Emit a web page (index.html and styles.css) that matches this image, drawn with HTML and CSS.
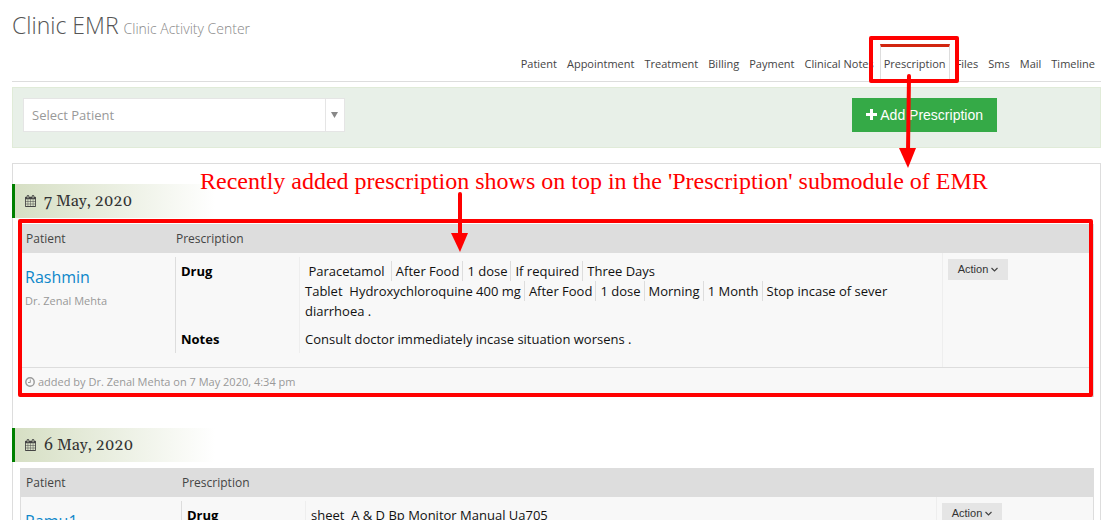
FILE: index.html
```html
<!DOCTYPE html>
<html lang="en">
<head>
<meta charset="utf-8">
<title>Clinic EMR</title>
<link rel="stylesheet" href="styles.css">
</head>
<body>
<svg width="0" height="0" class="sprite" aria-hidden="true">
  <symbol id="calendar" viewBox="0 0 1664 1792">
    <path d="M128 1664h288v-288h-288v288zM480 1664h320v-288h-320v288zM128 1312h288v-320h-288v320zM480 1312h320v-320h-320v320zM128 928h288v-288h-288v288zM864 1664h320v-288h-320v288zM480 928h320v-288h-320v288zM1248 1664h288v-288h-288v288zM864 1312h320v-320h-320v320zM512 448v-288q0-13-9.500-22.500t-22.500-9.500h-64q-13 0-22.500 9.500t-9.500 22.500v288q0 13 9.500 22.500t22.500 9.500h64q13 0 22.500-9.500t9.500-22.500zM1248 1312h288v-320h-288v320zM864 928h320v-288h-320v288zM1248 928h288v-288h-288v288zM1280 448v-288q0-13-9.500-22.500t-22.500-9.500h-64q-13 0-22.500 9.500t-9.500 22.500v288q0 13 9.500 22.500t22.500 9.500h64q13 0 22.500-9.500t9.500-22.500zM1664 384v1280q0 52-38 90t-90 38h-1408q-52 0-90-38t-38-90v-1280q0-52 38-90t90-38h128v-96q0-66 47-113t113-47h64q66 0 113 47t47 113v96h384v-96q0-66 47-113t113-47h64q66 0 113 47t47 113v96h128q52 0 90 38t38 90z"/>
  </symbol>
</svg>
<main class="page">
  <h1 class="title">Clinic EMR <small>Clinic Activity Center</small></h1>
  <nav class="tabs">
    <a href="#">Patient</a>
    <a href="#">Appointment</a>
    <a href="#">Treatment</a>
    <a href="#">Billing</a>
    <a href="#">Payment</a>
    <a href="#">Clinical Notes</a>
    <a href="#" class="active" aria-current="page">Prescription
      <span class="tab-mark"></span>
      <svg class="tab-arrow" width="18" height="94" viewBox="0 0 18 94" aria-hidden="true"><path d="M10 2L9 78" stroke="#f00" stroke-width="4" stroke-linecap="round"/><path d="M0 74H17L9 94Z" fill="#f00"/></svg>
    </a>
    <a href="#">Files</a>
    <a href="#">Sms</a>
    <a href="#">Mail</a>
    <a href="#">Timeline</a>
  </nav>
  <section class="toolbar">
    <div class="picker">
      <select aria-label="Select Patient"><option>Select Patient</option></select>
      <svg class="caret" width="7" height="6" viewBox="0 0 7 6" aria-hidden="true"><path d="M0 0H7L3.500 6Z" fill="#888"/></svg>
    </div>
    <button type="button" class="add"><svg width="11" height="11" viewBox="0 0 11 11" aria-hidden="true"><path d="M4 0H7V4H11V7H7V11H4V7H0V4H4Z" fill="#fff"/></svg>Add Prescription</button>
  </section>
  <section class="timeline">
    <p class="note">Recently added prescription shows on top in the 'Prescription' submodule of EMR</p>
    <section class="day">
      <h2 class="date"><svg width="11" height="12" aria-hidden="true"><use href="#calendar"/></svg>7 May, 2020</h2>
      <div class="record">
        <table class="card">
          <colgroup><col class="c-patient"><col><col class="c-action"></colgroup>
          <thead><tr><th>Patient</th><th colspan="2">Prescription</th></tr></thead>
          <tbody>
            <tr>
              <td><a href="#" class="name">Rashmin</a><div class="doctor">Dr. Zenal Mehta</div></td>
              <td>
                <dl class="details">
                  <dt>Drug</dt>
                  <dd>
                    <div>&nbsp;Paracetamol&nbsp;<span>After Food</span><span>1 dose</span><span>If required</span><span>Three Days</span></div>
                    <div>Tablet &nbsp;Hydroxychloroquine 400 mg<span>After Food</span><span>1 dose</span><span>Morning</span><span>1 Month</span><span>Stop incase of sever</span> diarrhoea .</div>
                  </dd>
                  <dt>Notes</dt>
                  <dd>Consult doctor immediately incase situation worsens .</dd>
                </dl>
              </td>
              <td class="action"><button type="button">Action<svg width="7" height="5" viewBox="0 0 7 5" aria-hidden="true"><path d="M.5 1L3.500 4L6.500 1" fill="none" stroke="#444" stroke-width="1.200"/></svg></button></td>
            </tr>
          </tbody>
          <tfoot><tr><td colspan="3"><svg width="10" height="10" viewBox="0 0 10 10" aria-hidden="true"><circle cx="5" cy="5" r="4.200" fill="none" stroke="#999" stroke-width="1.400"/><path d="M5.300 2.500V5.500H3" fill="none" stroke="#999"/></svg>added by Dr. Zenal Mehta on 7 May 2020, 4:34 pm</td></tr></tfoot>
        </table>
        <span class="record-mark"></span>
        <svg class="record-arrow" width="18" height="60" viewBox="0 0 18 60" aria-hidden="true"><path d="M9 2V46" stroke="#f00" stroke-width="4" stroke-linecap="round"/><path d="M0 41H17L9 60Z" fill="#f00"/></svg>
      </div>
    </section>
    <section class="day">
      <h2 class="date"><svg width="11" height="12" aria-hidden="true"><use href="#calendar"/></svg>6 May, 2020</h2>
      <div class="record">
        <table class="card">
          <colgroup><col class="c-patient-wide"><col><col class="c-action-wide"></colgroup>
          <thead><tr><th>Patient</th><th colspan="2">Prescription</th></tr></thead>
          <tbody>
            <tr>
              <td><a href="#" class="name">Ramu1</a></td>
              <td>
                <dl class="details">
                  <dt>Drug</dt>
                  <dd>sheet &nbsp;A &amp; D Bp Monitor Manual Ua705</dd>
                </dl>
              </td>
              <td class="action"><button type="button">Action<svg width="7" height="5" viewBox="0 0 7 5" aria-hidden="true"><path d="M.5 1L3.500 4L6.500 1" fill="none" stroke="#444" stroke-width="1.200"/></svg></button></td>
            </tr>
          </tbody>
        </table>
      </div>
    </section>
  </section>
</main>
</body>
</html>
```
FILE: styles.css
```css
* { box-sizing: border-box; }
html { overflow: hidden; }
body {
  margin: 0;
  background: #fff;
  color: #111;
  font: 13px/20px "Open Sans", "Noto Sans", sans-serif;
}
a { text-decoration: none; }
button { cursor: pointer; border: 0; font-family: "Liberation Sans", Arial, sans-serif; }
.sprite { position: absolute; }
.page { padding: 10px 5px 0 12px; }

.title {
  margin: 0;
  font-size: 23px;
  line-height: 30px;
  font-weight: 300;
  color: #555;
}
.title small { font-size: 14px; line-height: 14px; color: #888; margin-left: -1px; }

.tabs {
  display: flex;
  justify-content: flex-end;
  margin-top: 4px;
  padding-right: 1px;
  border-bottom: 1px solid #ddd;
  font-size: 11px;
}
.tabs a {
  position: relative;
  margin: 0 1px;
  padding: 7px 3px;
  border: 1px solid transparent;
  border-top-width: 3px;
  border-bottom: 0;
  color: #444;
}
.tabs .active { border-color: #d12610 #ddd; }
.tab-mark {
  position: absolute;
  z-index: 2;
  inset: -11px -10px -2px -12px;
  border: 4px solid #f00;
  border-radius: 2px;
}
.tab-arrow { position: absolute; z-index: 3; top: 27px; left: 18px; }

.toolbar {
  display: flex;
  justify-content: space-between;
  align-items: flex-start;
  margin-top: 5px;
  padding: 10px 103px 15px 10px;
  border: 1px solid #e0ebd8;
  background: #e8f0e8;
}
.picker { position: relative; width: 322px; }
.picker select {
  display: block;
  appearance: none;
  width: 100%;
  height: 34px;
  padding: 0 8px;
  border: 1px solid #e5e5e5;
  border-radius: 0;
  background: linear-gradient(#e5e5e5, #e5e5e5) right 18px top / 1px 100% no-repeat #fff;
  color: #999;
  font: 13px "Open Sans", "Noto Sans", sans-serif;
}
.caret { position: absolute; right: 7px; top: 14px; }
.add {
  height: 34px;
  padding: 0 14px;
  background: #35aa47;
  color: #fff;
  font-size: 14px;
}
.add svg { margin-right: 3px; }

.timeline {
  position: relative;
  margin-top: 15px;
  padding: 20px 6px 0 7px;
  border: 1px solid #ddd;
}
.note {
  position: absolute;
  z-index: 3;
  top: 3px;
  left: 187px;
  margin: 0;
  color: #f00;
  font: 24px/28px "Liberation Serif", serif;
  white-space: nowrap;
}
.day { margin-bottom: 31px; }
.date {
  display: flex;
  align-items: center;
  gap: 8px;
  width: 203px;
  height: 34px;
  margin: 0 0 6px -8px;
  padding-left: 10px;
  border-left: 3px solid #008000;
  background: linear-gradient(to right, #d6dfc4, #fff);
  color: #333;
  font: 16px Gelasio, Georgia, "DejaVu Serif", serif;
}
.date svg { fill: #444; }

.record { position: relative; }
.card {
  width: 100%;
  table-layout: fixed;
  border-spacing: 0;
  border: 1px solid #ddd;
  border-top: 0;
  background: #f8f8f8;
}
.c-patient { width: 150px; }
.c-action { width: 151px; }
.c-patient-wide { width: 156px; }
.c-action-wide { width: 157px; }
.card th, .card td { padding: 4px; text-align: left; vertical-align: top; }
.card th {
  padding: 5px 5px 4px;
  background: #ddd;
  color: #444;
  font-size: 12px;
  font-weight: 400;
}
.name {
  display: block;
  margin-top: 10px;
  color: #0d87ca;
  font-size: 16px;
  line-height: 20px;
}
.doctor { margin-top: 4px; color: #999; font-size: 11px; }
.details {
  display: grid;
  grid-template-columns: 124px 1fr;
  margin: 0 0 10px;
}
.details dt, .details dd { margin: 0; padding: 4px 5px; border-left: 1px solid #ddd; }
.details dd { border-color: #eee; }
.details dt { font-weight: 700; color: #000; }
.details span { margin-left: 3px; padding: 1px 0 1px 4px; border-left: 1px solid #ddd; }
.card .action { padding: 5px; border-left: 1px solid #eee; }
.action button {
  width: 60px;
  height: 21px;
  padding: 0;
  background: #e5e5e5;
  color: #333;
  font-size: 11px;
}
.action svg { margin-left: 3px; vertical-align: 1px; }
.card tfoot td { border-top: 1px solid #ddd; color: #999; font-size: 11px; }
.card tfoot svg { margin-right: 3px; vertical-align: -1px; }
.record-mark {
  position: absolute;
  z-index: 2;
  inset: -5px 1px 0 -2px;
  border: 4px solid #f00;
  border-radius: 2px;
}
.record-arrow { position: absolute; z-index: 3; top: -32px; left: 431px; }
```
